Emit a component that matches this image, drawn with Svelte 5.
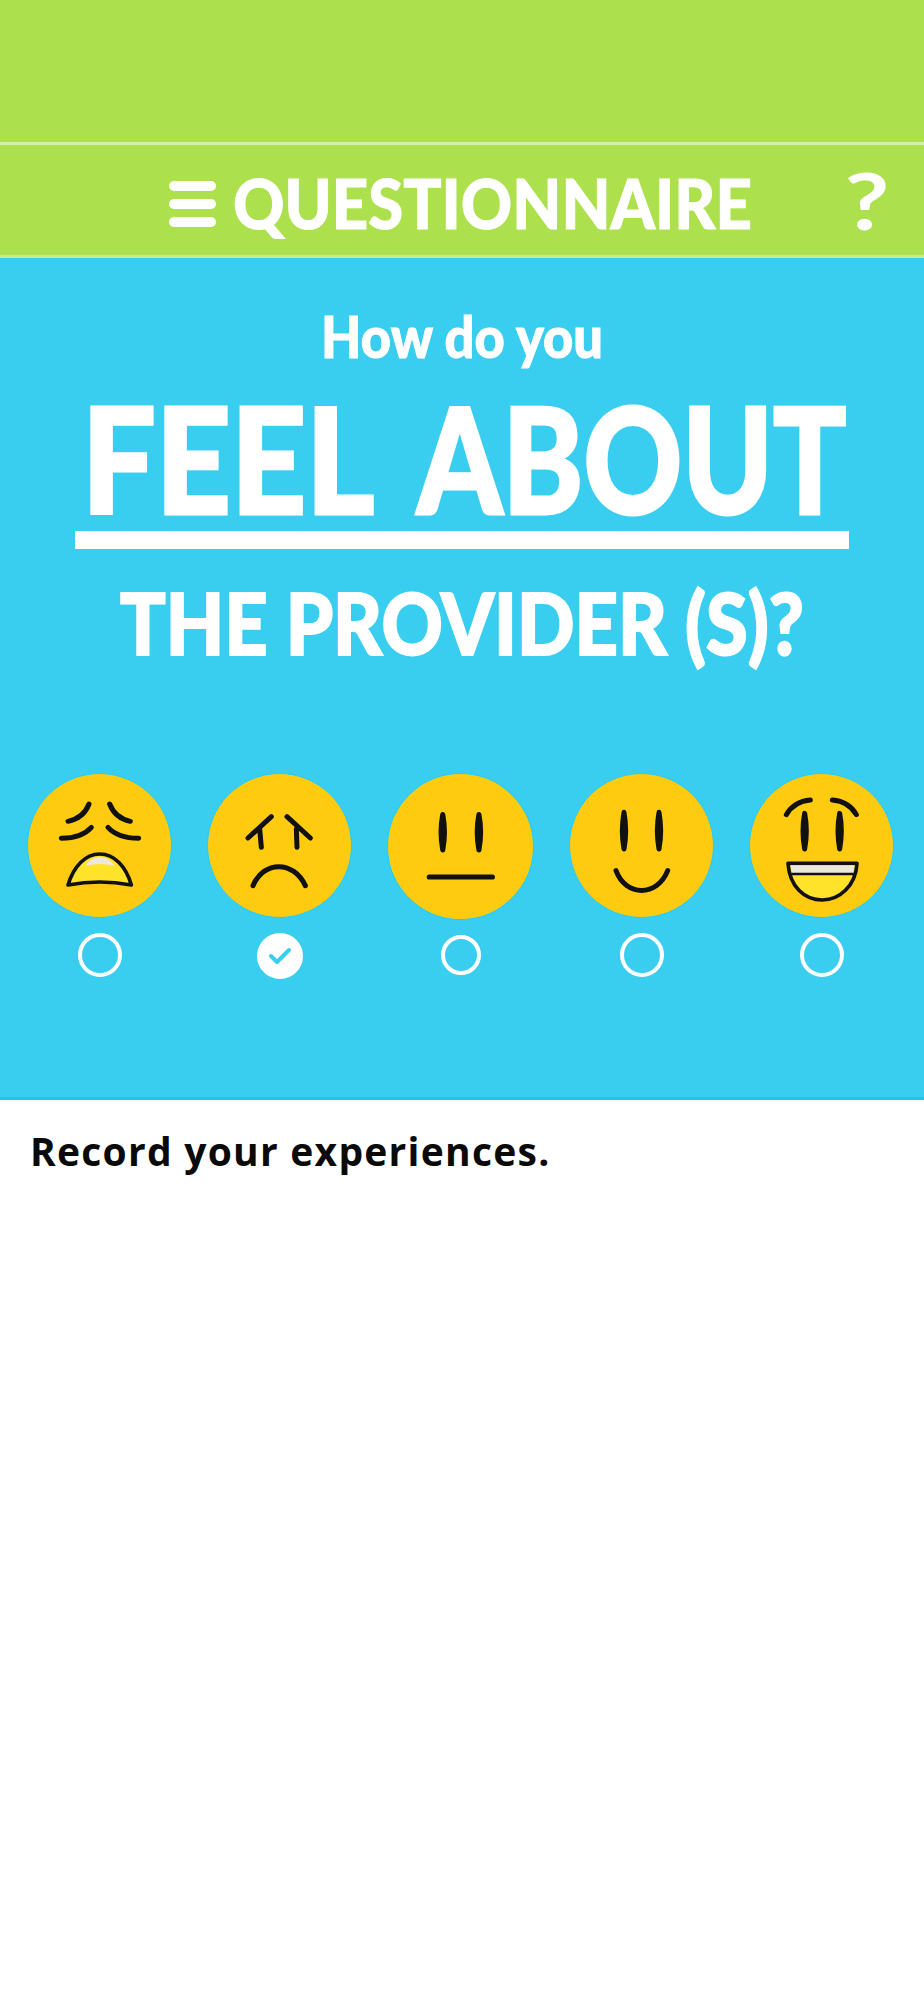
<script>
  const faces = [
    { id: 'weary', size: 145 },
    { id: 'sad', size: 145, checked: true },
    { id: 'flat', size: 147, small: true },
    { id: 'smile', size: 145 },
    { id: 'laugh', size: 145 }
  ];

  // eyes are thin lenses rather than plain lines
  const eye = (x, y1, y2) => `M${x} ${y1}Q${x + 10} ${(y1 + y2) / 2} ${x} ${y2}Q${x - 10} ${(y1 + y2) / 2} ${x} ${y1}Z`;
</script>

<div class="page">
  <div class="top"></div>
  <header class="bar">
    <div class="burger"><span></span><span></span><span></span></div>
    <span class="title">QUESTIONNAIRE</span>
    <span class="help">?</span>
  </header>

  <section class="hero">
    <div class="how">How do you</div>
    <div class="feel">FEEL <span class="about">ABOUT</span></div>
    <div class="rule"></div>
    <div class="provider">THE PROVIDER (S)?</div>

    <div class="faces">
      {#each faces as face}
        <div class="option">
          <svg class="face" width={face.size} height={face.size} viewBox="0 0 435 435">
            <circle cx="217.5" cy="217.5" r="216" class="skin" />
            {#if face.id === 'weary'}
              <path class="ink" d="M186 93Q170 135 123 145M193 163Q165 195 103 196M248 93Q264 135 310 145M243 163Q272 195 335 196" />
              <path class="ink mouth" d="M123 336C140 280 175 243 218 243C262 243 297 280 313 336Q218 318 123 336Z" />
              <path class="teeth" d="M176 278C190 258 205 253 218 253C232 253 248 258 262 278Q218 268 176 278Z" />
            {:else if face.id === 'sad'}
              <path class="ink" d="M193 131L123 195M158 168L163 223M240 131L310 195M268 168L270 223M138 338C170 262 260 262 295 338" />
            {:else if face.id === 'flat'}
              <path class="ink" d={eye(165, 123, 228)} />
              <path class="ink" d={eye(272, 123, 228)} />
              <path class="ink" d="M125 308H312" />
            {:else if face.id === 'smile'}
              <path class="ink" d={eye(165, 118, 228)} />
              <path class="ink" d={eye(270, 118, 228)} />
              <path class="ink" d="M141 293C170 372 265 372 296 293" />
            {:else}
              <path class="ink" d="M112 125Q135 85 184 81M250 81Q300 85 322 125" />
              <path class="ink" d={eye(167, 121, 228)} />
              <path class="ink" d={eye(272, 121, 228)} />
              <path class="ink mouth" d="M117 271H324C320 340 270 381 220 381C165 381 122 340 117 271Z" />
              <path class="teeth" d="M124 277H317L311 300H130Z" />
              <path class="ink thin" d="M130 303H311" />
            {/if}
          </svg>
          <span class="radio" class:checked={face.checked} class:small={face.small}>
            {#if face.checked}
              <svg width="24" height="20" viewBox="0 0 24 20"><path d="M3 10l6 6L21 4" /></svg>
            {/if}
          </span>
        </div>
      {/each}
    </div>
  </section>

  <p class="record">Record your experiences.</p>
</div>

<style>
  :global(body) {
    background: #fff;
  }
  .page {
    width: 924px;
    height: 2000px;
    overflow: hidden;
    font-family: Lato, sans-serif;
  }
  .top {
    height: 142px;
    background: #ade04d;
    border-bottom: 3px solid #d5eea5;
  }
  .bar {
    height: 110px;
    background: #ade04d;
    border-bottom: 3px solid #c9ec8a;
    display: flex;
    align-items: center;
    padding: 0 39px 0 169px;
    color: #fff;
  }
  .burger {
    display: flex;
    flex-direction: column;
    gap: 8px;
    width: 47px;
    margin: 8px 17px 0 0;
  }
  .burger span {
    height: 10px;
    border-radius: 5px;
    background: #fff;
  }
  .title {
    font-size: 69px;
    line-height: 1;
    font-weight: 900;
    white-space: nowrap;
    display: inline-block;
    margin-top: 4px;
    -webkit-text-stroke: 1px #fff;
    transform: scaleX(0.92);
    transform-origin: left center;
  }
  .help {
    margin-left: auto;
    font-size: 78px;
    line-height: 1;
    font-weight: 700;
    transform: scaleX(1.25);
  }
  .hero {
    height: 842px;
    box-sizing: border-box;
    background: #39cdef;
    border-bottom: 3px solid #22c5ee;
    padding-top: 50px;
    color: #fff;
    font-weight: 900;
    text-align: center;
    white-space: nowrap;
  }
  .how {
    font-size: 57px;
    line-height: 1;
    margin-bottom: 20px;
    -webkit-text-stroke: 1px #fff;
    transform: scaleX(0.92);
  }
  .feel {
    font-size: 146px;
    line-height: 1;
    margin-top: 6px;
    padding-left: 91px;
    text-align: left;
    word-spacing: 17px;
    -webkit-text-stroke: 3px #fff;
    transform: scaleX(0.897);
    transform-origin: left center;
  }
  .about {
    display: inline-block;
    transform: scaleX(0.93);
    transform-origin: left center;
  }
  .rule {
    height: 18px;
    background: #fff;
    margin: 0 75px 30px;
  }
  .provider {
    font-size: 86px;
    line-height: 1;
    -webkit-text-stroke: 2px #fff;
    transform: scaleX(0.88);
  }
  .faces {
    display: flex;
    gap: 35px;
    padding-left: 27px;
    margin-top: 108px;
  }
  .option {
    display: flex;
    flex-direction: column;
    align-items: center;
    gap: 15px;
  }
  .face {
    display: block;
  }
  .skin {
    fill: #ffcb11;
    stroke: #22cdf8;
    stroke-width: 3;
  }
  .ink {
    fill: #111;
    stroke: #111;
    stroke-width: 15;
    stroke-linecap: round;
    stroke-linejoin: round;
  }
  path.ink:not([d*='Z']) {
    fill: none;
  }
  .mouth {
    fill: #ffe22a;
    stroke-width: 11;
  }
  .thin {
    stroke-width: 7;
  }
  .teeth {
    fill: #ece8e0;
  }
  .radio {
    width: 44px;
    height: 44px;
    box-sizing: border-box;
    border: 4px solid #fff;
    border-radius: 50%;
    display: flex;
    align-items: center;
    justify-content: center;
  }
  .radio.small {
    width: 40px;
    height: 40px;
  }
  .radio.checked {
    width: 46px;
    height: 46px;
    background: #fff;
  }
  .radio path {
    fill: none;
    stroke: #39cdef;
    stroke-width: 4;
    stroke-linecap: round;
    stroke-linejoin: round;
  }
  .record {
    margin: 26px 0 0 30px;
    font-family: "Open Sans", sans-serif;
    font-weight: 700;
    font-size: 39px;
    letter-spacing: 1.25px;
    line-height: 1.3;
    color: #0a0a0a;
  }
</style>
